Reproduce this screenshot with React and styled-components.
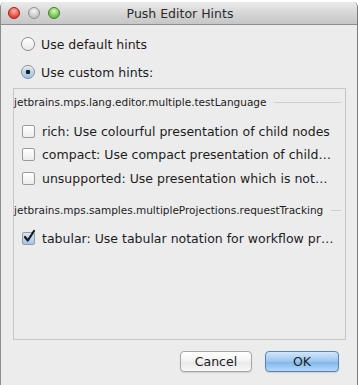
import styled, { createGlobalStyle } from 'styled-components';

const GlobalStyle = createGlobalStyle`
  html, body {
    margin: 0;
    padding: 0;
    background: #ffffff;
  }
  body {
    font-family: "DejaVu Sans", "Liberation Sans", sans-serif;
  }
`;

function App() {
  return (
    <>
      <GlobalStyle />
      <Window>
        <TitleBar>
          <Lights>
            <Light color="red" />
            <Light color="gray" />
            <Light color="green" />
          </Lights>
          <Title>Push Editor Hints</Title>
        </TitleBar>

        <Body>
          <RadioGroup>
            <RadioRow>
              <Radio />
              <Label>Use default hints</Label>
            </RadioRow>
            <RadioRow>
              <Radio checked />
              <Label>Use custom hints:</Label>
            </RadioRow>
          </RadioGroup>

          <Group>
            <GroupHeader>
              <HeaderText>jetbrains.mps.lang.editor.multiple.testLanguage</HeaderText>
              <HeaderRule />
            </GroupHeader>
            <CheckList top="14px" bottom="11px">
              <CheckRow>
                <Checkbox />
                <Label>rich: Use colourful presentation of child nodes</Label>
              </CheckRow>
              <CheckRow>
                <Checkbox />
                <Label>compact: Use compact presentation of child…</Label>
              </CheckRow>
              <CheckRow>
                <Checkbox />
                <Label>unsupported: Use presentation which is not…</Label>
              </CheckRow>
            </CheckList>

            <GroupHeader>
              <HeaderText>jetbrains.mps.samples.multipleProjections.requestTracking</HeaderText>
              <HeaderRule />
            </GroupHeader>
            <CheckList top="13px" bottom="0">
              <CheckRow>
                <Checkbox checked>
                  <svg width="14" height="15" viewBox="0 0 14 15">
                    <path d="M3 8 L5.8 11.5 L12 2" fill="none" stroke="#1a1a1a" strokeWidth="2.2" strokeLinecap="round" strokeLinejoin="round" />
                  </svg>
                </Checkbox>
                <Label>tabular: Use tabular notation for workflow pr…</Label>
              </CheckRow>
            </CheckList>
          </Group>

          <Buttons>
            <Button width="72px">Cancel</Button>
            <Button width="74px" primary>OK</Button>
          </Buttons>
        </Body>
      </Window>
    </>
  );
}

const Window = styled.div`
  box-sizing: border-box;
  margin-top: 2px;
  width: 358px;
  height: 383px;
  background: #ececec;
  border-left: 1px solid #8c8c8c;
  border-right: 1px solid #7a7a7a;
  border-radius: 5px 5px 0 0;
  overflow: hidden;
  display: flex;
  flex-direction: column;
`;

const TitleBar = styled.div`
  position: relative;
  height: 22px;
  flex: none;
  display: flex;
  align-items: center;
  justify-content: center;
  background: linear-gradient(#ebebeb, #d6d6d6 50%, #c6c6c6);
  border-bottom: 1px solid #8e8e8e;
`;

const Lights = styled.div`
  position: absolute;
  left: 7px;
  top: 5px;
  display: flex;
  gap: 8px;
`;

const lightColors = {
  red: ['#ffb3a8', '#e2463c', '#9c1f16'],
  gray: ['#f6f6f6', '#c4c4c4', '#8e8e8e'],
  green: ['#d6f5b5', '#6cc04a', '#3c7f22'],
};

const Light = styled.span`
  width: 12px;
  height: 12px;
  border-radius: 50%;
  box-sizing: border-box;
  border: 1px solid ${(p) => lightColors[p.color][2]};
  background: radial-gradient(circle at 50% 30%, ${(p) => lightColors[p.color][0]} 0%, ${(p) => lightColors[p.color][1]} 70%);
`;

const Title = styled.div`
  font-size: 12.5px;
  color: #2b2b2b;
  margin-left: 2px;
`;

const Body = styled.div`
  flex: 1;
  display: flex;
  flex-direction: column;
  padding: 11px 0 0 12px;
`;

const RadioGroup = styled.div`
  display: flex;
  flex-direction: column;
  gap: 12px;
  padding-left: 8px;
`;

const RadioRow = styled.div`
  display: flex;
  align-items: center;
  gap: 6px;
  height: 16px;
`;

const Radio = styled.span`
  box-sizing: border-box;
  width: 14px;
  height: 14px;
  border-radius: 50%;
  border: 1px solid #8d8d8d;
  background: ${(p) =>
    p.checked
      ? 'radial-gradient(circle, #1d1d1d 0 2px, transparent 2.5px), linear-gradient(#d5e6f6, #9fc4e8)'
      : 'linear-gradient(#ffffff, #e9e9e9)'};
  box-shadow: inset 0 1px 1px rgba(255, 255, 255, 0.8);
`;

const Label = styled.span`
  font-size: 12.5px;
  color: #1c1c1c;
  white-space: nowrap;
`;

const Group = styled.div`
  box-sizing: border-box;
  margin-top: 8px;
  width: 333px;
  height: 252px;
  border: 1px solid #c6c6c6;
  display: flex;
  flex-direction: column;
`;

const GroupHeader = styled.div`
  display: flex;
  align-items: center;
  gap: 8px;
  height: 14px;
  margin-top: 6px;
  padding-right: 4px;
`;

const HeaderText = styled.span`
  font-size: 10.5px;
  color: #1c1c1c;
  white-space: nowrap;
`;

const HeaderRule = styled.span`
  flex: 1;
  height: 1px;
  background: #cfcfcf;
`;

const CheckList = styled.div`
  display: flex;
  flex-direction: column;
  gap: 7.5px;
  padding: ${(p) => p.top} 0 ${(p) => p.bottom} 8px;
`;

const CheckRow = styled.div`
  display: flex;
  align-items: center;
  gap: 7px;
  height: 16px;
`;

const Checkbox = styled.span`
  box-sizing: border-box;
  width: 13px;
  height: 13px;
  border-radius: 2px;
  border: 1px solid #9a9a9a;
  position: relative;
  background: ${(p) => (p.checked ? 'linear-gradient(#d7e7f7, #a3c6ea)' : 'linear-gradient(#ffffff, #ececec)')};
  svg {
    position: absolute;
    left: -1px;
    top: -4px;
  }
`;

const Buttons = styled.div`
  display: flex;
  justify-content: flex-end;
  gap: 13px;
  margin-top: 11px;
  padding-right: 18px;
`;

const Button = styled.button`
  box-sizing: border-box;
  width: ${(p) => p.width};
  height: 21px;
  padding: 0;
  font-family: "DejaVu Sans", "Liberation Sans", sans-serif;
  font-size: 12.5px;
  color: #1c1c1c;
  border-radius: 4px;
  border: 1px solid ${(p) => (p.primary ? '#5a82b4' : '#a5a5a5')};
  background: ${(p) =>
    p.primary
      ? 'linear-gradient(#d3e6fa, #9ac5f1 50%, #7fb4ec 51%, #b3daf9)'
      : 'linear-gradient(#ffffff, #f2f2f2 50%, #e8e8e8 51%, #f6f6f6)'};
  box-shadow: 0 1px 1px rgba(0, 0, 0, 0.12);
`;

export default App;
